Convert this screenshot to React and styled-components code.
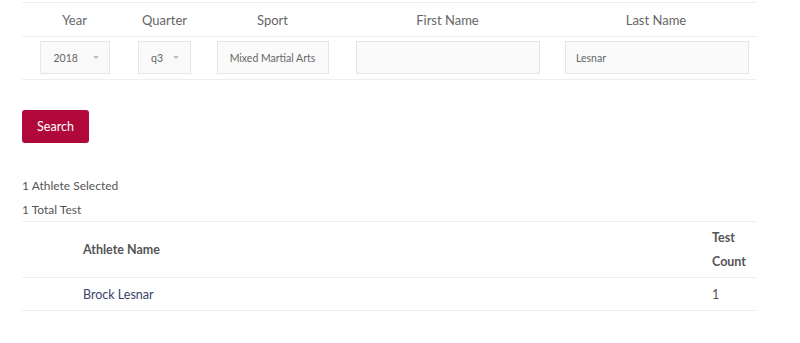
import React from "react";
import styled, { createGlobalStyle } from "styled-components";

const Global = createGlobalStyle`
  body { margin: 0; background: #fff; font-family: Lato, "Open Sans", sans-serif; color: #555; }
`;

const Page = styled.div`
  padding: 2px 0 0 22px;
  width: 735px;
`;

const FilterGrid = styled.div`
  display: grid;
  grid-template-columns: 105px 75px 141px 209px 205px;
  border-top: 1px solid #eee;
  border-bottom: 1px solid #eee;
`;

const HeadCell = styled.div`
  height: 33px;
  display: flex;
  align-items: center;
  justify-content: center;
  padding-left: ${(p) => p.$shift || 0}px;
  font-size: 13px;
  color: #666;
  border-bottom: 1px solid #eee;
`;

const FieldCell = styled.div`
  box-sizing: border-box;
  height: 42px;
  padding-top: 4px;
  padding-left: ${(p) => p.$shift || 0}px;
  display: flex;
  align-items: flex-start;
  justify-content: center;
`;

const Field = styled.div`
  box-sizing: border-box;
  width: ${(p) => p.$w}px;
  height: 33px;
  background: #fafafa;
  border: 1px solid #e6e6e6;
  display: flex;
  align-items: center;
  justify-content: ${(p) => (p.$center ? "center" : "flex-start")};
  padding: ${(p) => (p.$center ? "0" : `0 0 0 ${p.$pl || 10}px`)};
  font-size: 10.5px;
  color: #666;
`;

const Caret = styled.span`
  width: 0;
  height: 0;
  border-left: 3px solid transparent;
  border-right: 3px solid transparent;
  border-top: 3px solid #bbb;
  margin-left: ${(p) => p.$ml || 10}px;
`;

const SearchButton = styled.button`
  margin-top: 30px;
  width: 67px;
  height: 33px;
  border: none;
  border-radius: 3px;
  background: #b0083a;
  color: #fff;
  font-family: inherit;
  font-size: 12.5px;
  cursor: pointer;
`;

const Summary = styled.div`
  margin-top: 31px;
  margin-bottom: -1px;
  font-size: 12px;
  line-height: 24px;
  color: #555;
`;

const Table = styled.div`
  display: grid;
  grid-template-columns: 49px 629px 57px;
  border-top: 1px solid #eee;
`;

const Th = styled.div`
  padding: 4px 0 3px 12px;
  font-size: 12.5px;
  font-weight: 700;
  line-height: 24px;
  color: #555;
  display: flex;
  align-items: center;
  border-bottom: 1px solid #eee;
`;

const Td = styled.div`
  height: 32px;
  padding-left: 12px;
  font-size: 12.5px;
  display: flex;
  align-items: center;
  color: ${(p) => (p.$link ? "#3a3f6a" : "#555")};
  border-bottom: 1px solid #eee;
`;

export default function App() {
  return (
    <Page>
      <Global />
      <FilterGrid>
        <HeadCell>Year</HeadCell>
        <HeadCell>Quarter</HeadCell>
        <HeadCell>Sport</HeadCell>
        <HeadCell>First Name</HeadCell>
        <HeadCell $shift={3}>Last Name</HeadCell>
        <FieldCell>
          <Field $w={70} $pl={13}>
            2018<Caret $ml={15} />
          </Field>
        </FieldCell>
        <FieldCell>
          <Field $w={53} $pl={12}>
            q3<Caret $ml={10} />
          </Field>
        </FieldCell>
        <FieldCell>
          <Field $w={112} $center>Mixed Martial Arts</Field>
        </FieldCell>
        <FieldCell>
          <Field $w={184} />
        </FieldCell>
        <FieldCell $shift={5}>
          <Field $w={184} $pl={10}>Lesnar</Field>
        </FieldCell>
      </FilterGrid>
      <SearchButton>Search</SearchButton>
      <Summary>
        1 Athlete Selected
        <br />1 Total Test
      </Summary>
      <Table>
        <Th />
        <Th>Athlete Name</Th>
        <Th>
          Test
          <br />
          Count
        </Th>
        <Td />
        <Td $link>Brock Lesnar</Td>
        <Td>1</Td>
      </Table>
    </Page>
  );
}
